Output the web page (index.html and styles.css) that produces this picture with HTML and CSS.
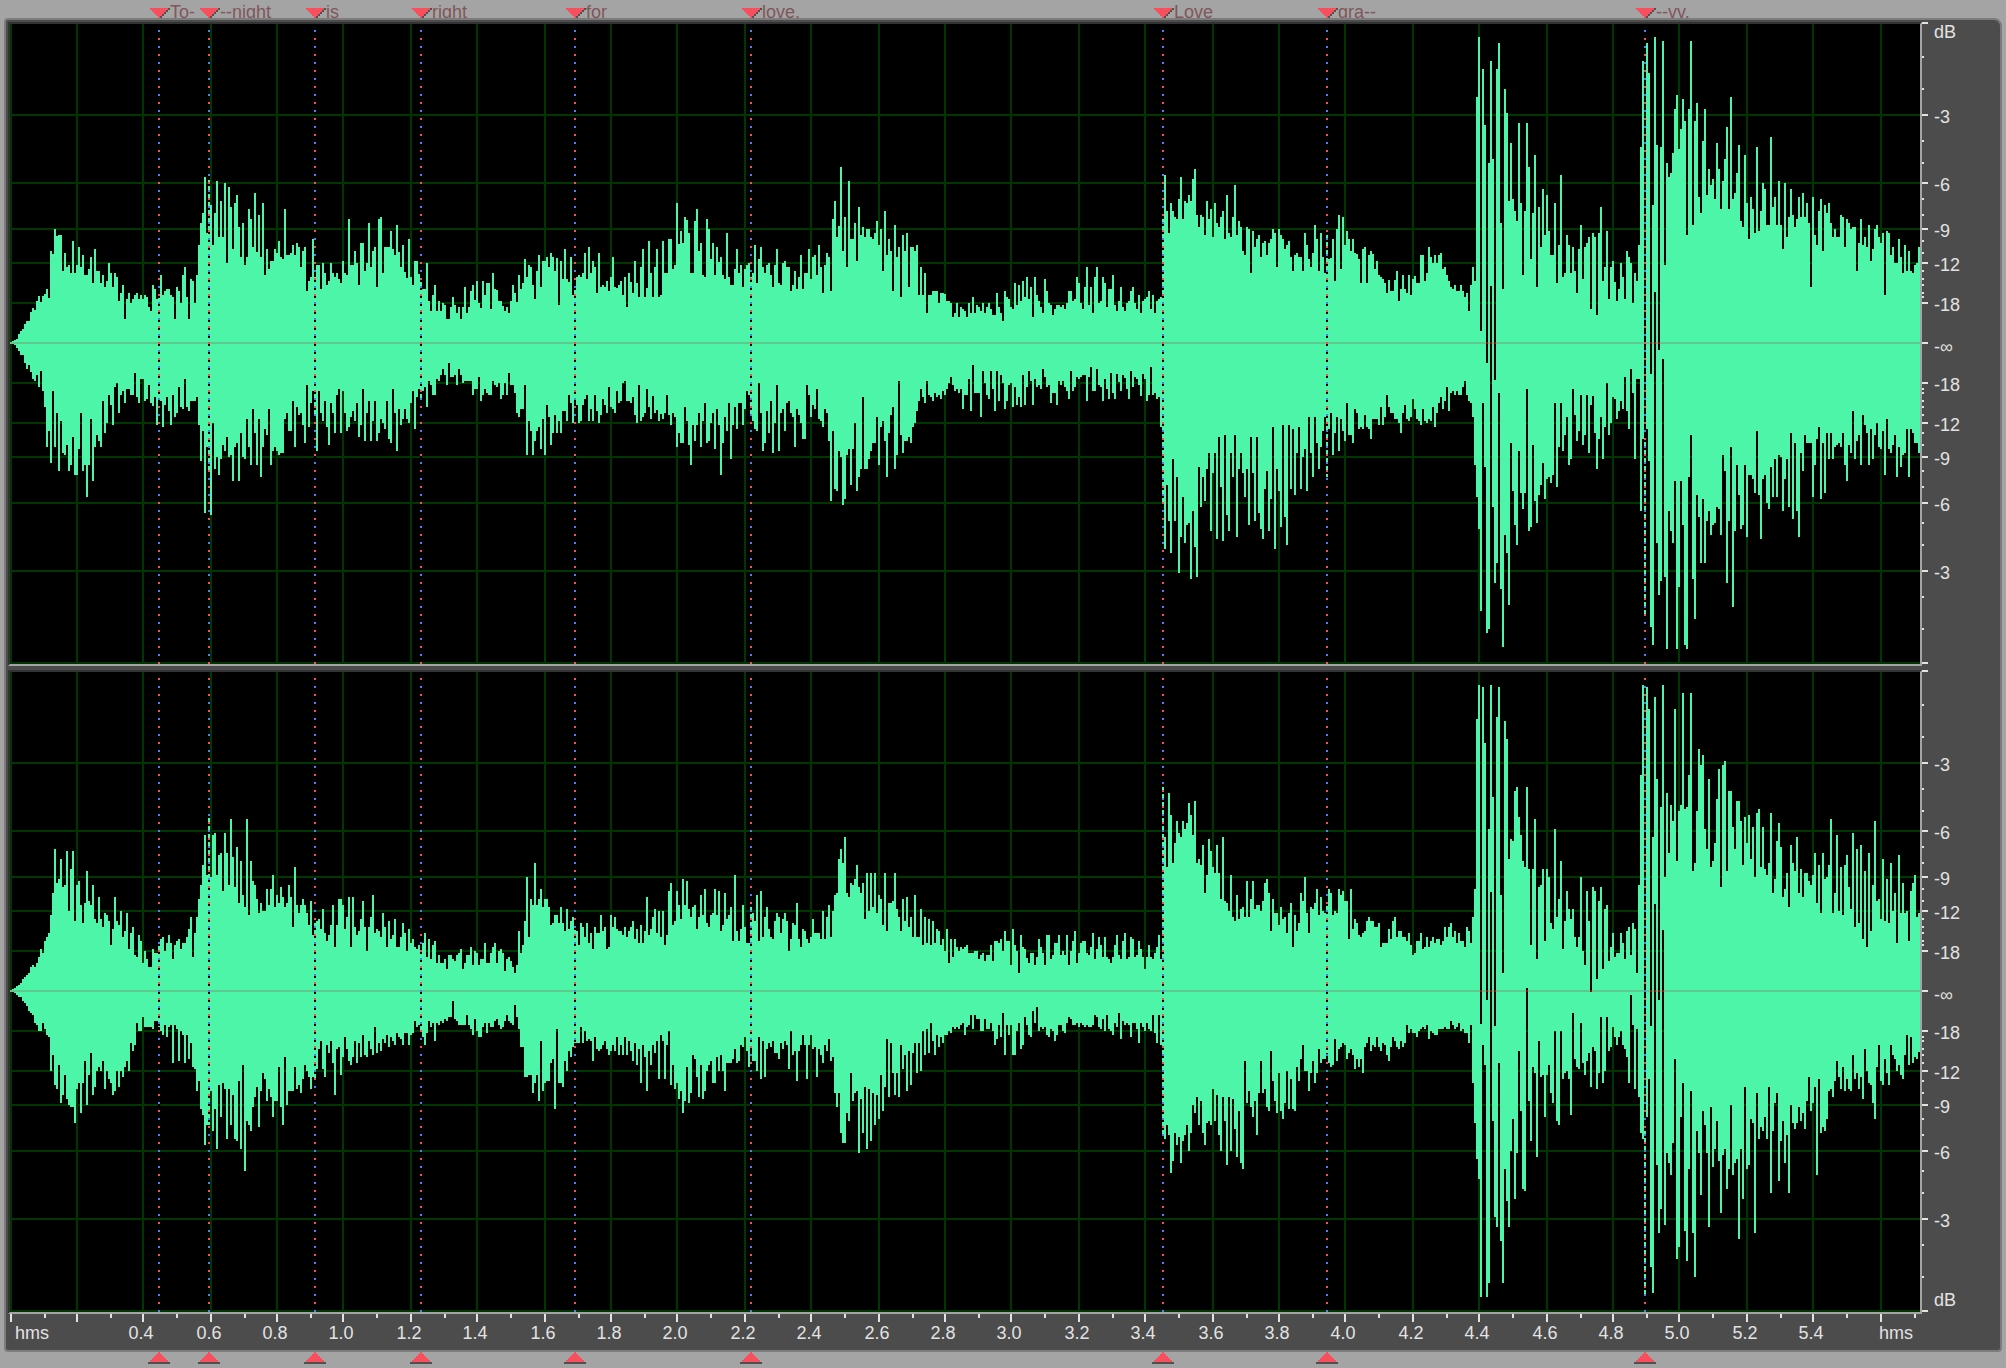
FILE: index.html
```html
<!DOCTYPE html>
<html lang="en">
<head>
  <meta charset="utf-8">
  <title>Waveform editor</title>
  <link rel="stylesheet" href="styles.css">
</head>
<body>
  <header class="marker-bar"><ol class="pins" id="pins-top"></ol></header>
  <main class="frame">
    <section class="channel" aria-label="Left channel">
      <div class="plot" id="plot-left"></div>
      <div class="scale" id="scale-left"></div>
    </section>
    <section class="channel channel-lower" aria-label="Right channel">
      <div class="plot" id="plot-right"></div>
      <div class="scale" id="scale-right"></div>
    </section>
    <div class="timeline" id="timeline"></div>
  </main>
  <footer class="marker-foot"><ol class="pins" id="pins-bottom"></ol></footer>
  <script src="waveform.js"></script>
</body>
</html>
```
FILE: styles.css
```css
* {
  box-sizing: border-box;
}

body {
  margin: 0;
  min-height: 100vh;
  padding: 0 4px;
  display: flex;
  flex-direction: column;
  background: #a4a4a4;
  font-family: "Liberation Sans", Arial, sans-serif;
  font-size: 18px;
  line-height: 20px;
}

svg {
  display: block;
  shape-rendering: crispEdges;
}

.pins {
  position: relative;
  height: 100%;
  margin: 0 82px 0 6px;
  padding: 0;
  list-style: none;
}

.marker-bar {
  height: 18px;
  overflow: hidden;
}

.marker-foot {
  height: 16px;
}

.pin {
  position: absolute;
  top: 0;
  line-height: 24px;
  padding-left: 11px;
  color: #80565a;
  white-space: nowrap;
}

.pin svg {
  position: absolute;
  left: -9px;
  top: 8px;
}

.marker-foot .pin svg {
  left: -11px;
  top: 0;
}

.frame {
  flex: 1;
  display: flex;
  flex-direction: column;
  padding: 2px 0 0 2px;
  background: #4c4c4c;
  border: 2px solid #7c7c7c;
  border-radius: 4px 8px 4px 4px;
}

.channel {
  flex: 1;
  display: flex;
  min-height: 300px;
}

.channel-lower {
  margin-top: 4px;
}

.plot {
  position: relative;
  flex: 1;
  background: #000;
  border: 2px solid #333;
  border-right-color: #a4a4a4;
  border-bottom-color: #a4a4a4;
}

.plot svg {
  position: absolute;
  width: 100%;
  height: 100%;
}

.grid {
  fill: #003700;
}

.silence {
  fill: #a80000;
}

.wave {
  fill: #4df5a8;
}

.zero {
  fill: #5dc98c;
}

.cue {
  position: absolute;
  top: 6px;
  bottom: 0;
  width: 2px;
  margin-left: -1px;
  background: repeating-linear-gradient(#4c83f4 0 2px, #000 2px 4px, transparent 4px 8px, #f74f5e 8px 10px, #000 10px 12px, transparent 12px 16px);
}

.channel-lower .cue {
  background: repeating-linear-gradient(#f74f5e 0 2px, #000 2px 4px, transparent 4px 8px, #4c83f4 8px 10px, #000 10px 12px, transparent 12px 16px);
}

.scale {
  position: relative;
  width: 78px;
  color: #e2e2e2;
}

.scale svg {
  width: 100%;
  height: 100%;
  fill: #e2e2e2;
}

.scale span {
  position: absolute;
  left: 12px;
  transform: translateY(-50%);
}

.timeline {
  position: relative;
  height: 36px;
  margin: 0 80px 0 2px;
  color: #e2e2e2;
}

.timeline svg {
  width: 100%;
  height: 8px;
  fill: #e2e2e2;
}

.timeline span {
  position: absolute;
  top: 9px;
  transform: translateX(-50%);
}
```
FILE: waveform.js
```js
// Plot units: 1910 wide, 640 high, zero line at y = 319. Peaks are sampled
// every 2 units; "n:" moves the write position, other tokens are peak heights.
const WIDTH = 1910, HEIGHT = 640, ZERO = 319, LEFT = 10;

const peaks = {
  leftUp: `11: 0 1 2 3 8 11 13 18 21 21 30 34 32 41 46 40 46 48 53 44 91 88 113 106 107 107 71 89 75 77 69 101 69 77 95 75 87 67 67 73 85 59 93 71 71 59 67 55 61 79 69 55 69 65 41 49 57 23 43 49 39 43 47 49 43 47 43 47 45 35 31 57 53 43 47 67 47 51 53 53 47 45 23 55 51 39 67 75 45 23 63 61
 199: 97 119 129 165 109 162 137 97 129 161 105 141 105 159 79 155 135 93 139 147 115 85 119 77 85 133 123 95 149 90 127 85 139 67 93 73 81 81 93 89 101 85 83 133 87 87 89 97 87 99 95 75 91 95 51 61 65 103 65 77 77 53 79 69 57 61 79 69 65 69 63 59 81 69 67
 349: 123 77 77 91 79 57 99 99 71 79 119 75 91 95 55 123 125 69 95 95 95 111 93 87 117 90 75 97 70 64 103 65 57 81 81 68 62 53 53 79 41 31 47 57 31 41 31 39 37 23 23 35 45 37 29 35 23 35 55 29 35 51 57 42 61 39 34 61 47 59 59 33 69 53 52 41 41 36 31 35 29 41 57 49 40 67 53 59 83 65 77 75 57 43 71 87 55 81 81 85 75 89 85 71 84 37 81 63 93 63 60 85 47 55 65 67 65 69 89 63 95 69 81 75 49 89 55 57 55 61 51 65 85 55 54 57 61 47 65 35 69 60 49 81 59 45 75 93 45 54 101 69
 661: 47 101 69 69 103 103 73 77 139 98 111 99 125 122 109 69 69 121 133 91 99 67 65 123 113 83 99 67 95 80 85 67 63 109 65 57 57 73 93 69 77 55 73 77 79 65 69 97 59 83 95 75 69 77 79 67 55 77 93 59 57 79 81 75 75 51 57 71 53 65 87 53 69 69 93 63 85 87 67 97 75 49 77 89 85 51 123 141 105
 839: 116 175 91 125 75 161 103 103 119 81 135 107 115 105 113 113 105 103 109 121 97 113 71 131 87 103 91 51 117 85 95 45 107 91 109 55 95 95 91 97 47 75 47 69 29 47 47 51 51 51 39 49 49 48 41 41 39 25 29 39 25 35 33 31 25 39 29 45 29 37 35 31 39 29 35 39 33 27 27 49 35 29 21 51 45 43 35 33 59 37 57 41 61 45 65 43 55 25 65 47 41 35 29 63 51 39 37 27 33 37 37 35 37 33 39 51 51 41 43 65 59 39 33 55 75 37 55 29 65 75 39 41 65 59 35 53 53 67 37 31 41 55 35 31 39 41 51 55 39 33 47 29 41 43 45 51
 1163: 123 167 131 109 139 131 125 123 143 165 123 141 139 147 141 163 173 127 115 127 125 107 141 123 133 105 139 119 115 125 131 103 147 109 105 125 157 107 121 115 91 87 115 113 69 111 95 103 107 85 99 101 87 99 103 113 109 75 113 107 103 93 97 101 85 71 87 89 85 85 71 109 97 83 75 89 117 103 71 109 85 69 107 83 84
 1333: 103 61 113 127 73 125 97 111 103 91 103 89 88 83 59 93 95 59 87 91 88 73 81 67 65 63 59 49 62 51 51 62 71 41 53 67 53 49 67 47 63 66 59 59 87 87 61 69 95 85 79 87 79 87 89 73 75 67 61 55 53 57 51 51 57 51 45 49
 1469: 31 57 75 61 245 305 11 273 217 -20 179 281 183 -37 273 299 119 53 253 229 141 199 143 131 121 219 139 67 131 219 175 83 129 187 55 135 95 153 107 147 111 87 87 139 59 97 167 65 69 107 97 69 95 71 49 93
 1581: 117 63 95 99 105 33 109 105 27 109 135 61 75 111 43 75 81 60 41 53 79 65 43 91 85 79 39 69 61
 1639: 97 195 281 -95 299 269 -31 137 305 197 -7 195 301 77 179 165 169 189 233 247 193 213 243 221 107 233 301 117 221 239 145 129 201 233 147 173 157 163 143 199 173 133 161 183 215 133 245 143 149 169 197 121 115 187 139 103 145 133 109 195 111 131 159 153 117 117
 1771: 205 135 145 117 161 117 93 159 105 125 153 127 115 123 145 125 149 125 139 119 55 145 107 97 131 143 91 137 129 139 119 105 113 105 105 127 125 95 123 119 113 115 115 71 99 123 97 105 95 117 81 93 113 117 105 99 109
 1885: 47 111 109 87 95 79 79 103 85 69 97 71 91 71 69 77 79 95`,
  leftDown: `11: 0 0 1 4 7 11 11 19 25 21 28 35 37 31 43 27 47 63 103 87 119 47 103 69 127 77 109 111 101 127 121 93 131 131 105 69
 87: 153 121 75 137 103 91 97 103 57 89 79 51 61 81 43 39 69 51 47 59 45 45 51 51 29 53 59 35 35 57 55 41 59 62 53 81 57 57 83 61 53 67 81 51 73 69 43 63 65 35 63 67 57 57 57 53 81
 201: 117 87 169 103 127 171 79 125 113 131 115 101 107 93 113 111 137 103 99 137 89 113 115 75 103 121 65 89 121 75 133 103 85 91 65 121 107 103 107 111 109 109 75 69 87 87 57 103 63 71 69 81 99 41 83 59 47 73
 317: 107 47 69 77 57 83 101 59 69 89 51 45 89 47 69 87 83 73 67 77 59 93 81 45 97 69 57 97 77 57 97 89 75 79 85 57 95 99 45 69 107 65 81 75 65 75 79 59 47 85 53 45 55 47 43 63 37 41 51 51 35 37 31 25 31 41 19 33 33 31 41 25 31 39 37 37 37 37 51 45 45 33 57 51 45 49 51 51 37 41 43 39 55 51 39 51 29 41 41 49 69 73 65 65
 527: 111 77 87 111 97 87 83 105 75 111 61 73 101 89 71 89 77 89 67 67 77 51 59 79 57 61 79 77 61 55 51 77 65 77 51 67 79 71 55 61 69 43 63 65 69 47 59 57 39 37 57 57 59 53 71 79 41 77 73 69 45 63 75 52 69 66 77
 661: 70 75 69 51 71 81 69 73 103 89 99 99 63 77 101 121 81 97 81 69 103 77 59 99 97 79 69 105 65 81 131 99 73 87 59 115 81 63 85 59 59 81 65 47 51 73 77 85 87 39 69 107 99 67 89 57 109 79 41 107 69 65 87 59 57 69 73 103 65 71 79 95 95 41 51 73 61 65 45 75 77 83 65 69 97
 831: 157 87 145 147 107 113 161 155 111 105 141 105 79 147 133 125 53 125 125 115 107 99 99 73 121 83 77 97 133 89 71 63 125 111 37 91 109 97 97 93 99 83 79 67 57 45 53 59 37 51 53 57 49 53 51 55 47 51 45 39 33 41 47 45 49 45 65 51 51 35 67 21 49 49 49 73 27 39 51 55 27 45 67
 999: 57 31 39 65 57 41 39 63 43 61 53 63 31 61 43 27 37 61 35 43 41 45 25 33 43 41 59 49 49 61 37 41 37 43 47 55 27 47 43 33 35 33 31 31 57 33 23 47 47 25 41 43 57 35 45 55 29 49 55 30 38 47 31 34 45 55 27 43 33 35 41 52 30 35 57 51 23 51 49 55 53 83
 1163: 160 205 141 177 209 115 177 133 229 193 153 199 181 179 235 167 203 233 123 163 133 157 125 109 187 129 109 195 93 143 197 91 171 187 109 133 91 193 125 109 129 153 125 181 93 129 177 93 169 185 195 145 127 187 155 83 205 125 147 183 81 173 201 81 145 85 151 109 83 145 113 105 147 73 109 133 73 99 125 103 87 73 133 85 69
 1333: 111 89 73 107 75 87 97 59 91 91 99 65 69 85 83 85 71 83 85 95 75 75 75 81 63 81 73 51 63 69 69 75 75 79 89 69 61 75 77 73 55 65 75 77 81 65 77 79 75 77 63 83 69 59 53 65 57 43 67 49 47 51 47 51 51 43 37 51 57 59
 1473: 73 121 153 185 267 59 123 289 285 -57 163 239 219 49 245 303 191 209 261 99 147 181 201 107 149 165 149 45 187 183 101 157 179 151 141 119 155 135 133 139 131 59 143 103 59 107 91 73 121 115 45 71 97 87 51 101 91 51 109 61 52 89 125 95 73 115 83 39 91 79 53 55 75 67 57 65 33 67 85 25 49 115 35 35
 1641: 167 95 270 85 117 283 301 -51 199 251 237 15 233 305 167 187 199 137 305 243 137 181 301 305 133 91 235 275 151 173 219 155 219 177 167 191 181 179 163 165 191 111 127 239 177 103 263 187 121 151 185 181 121 193 131 131 135 149 87 151 195 135 131 159 165 123 153 115 153 111 113 167 135 115 163 89 175 99
 1799: 193 109 127 91 99 99 99 153 121 95 83 155 99 149 89 115 89 115 103 101 99 103 89 121 137 101 109 67 115 97 91 121 71 81 89 121 85 115 91 79 103 105 87 131 75 105 109 101 91 133 103 123 111 109 85 133 85 89 99 99`,
  rightUp: `11: 0 1 2 4 5 7 11 13 15 17 23 25 23 27 33 41 37 49 53 57 75 97 141 107 111 131 103 105 139 79 121 139 69 105 109 85 67 87 119 89 85 105 71 67 93 71 63 77 75 69 45 61 93 69 65 79 53 59 77 41 57 63 35 33 55 49 27 39 31 23 23 41 37 37 47 51 53 39 47 55 47 31 45 49 51 41 47 47 53 61 73 33 57 73 91 105 125 155 115 173 113 155 157 115 135 137 99 157 137 105 171 133 103 143 87 129 95 83 171 75 129 109 105 91 77 87 79 79 101 85 101 115 83 95 87 103 93 83 87 105 93 63 123 85 77 85 91 85 77 65 89 55 67 69 71 61 81 57 49 55 65 85 43 65 91 91 85 61 73 93 43 93 63 55 59 71 89 63 39 63 73 95 57 61 59 53 77 63 43 69 51 55 71 43 43 53 67 57 39 61 47 51 43 41 45 39 47 57 33 51 31 45 49 27 35 27 27 31 21 35 35 31 29 35 37 41 21 27 35 35 43 25 39 37 25 31 31 47 27 27 37 43 47 27 39 41 37 19 31 33 29 23 17 25 59 37 45 69
 527: 113 53 91 85 127 85 91 101 83 91 91 83 65 67 75 75 67 83 67 59 81 61 69 73 61 59 45 67 63 53 67 47 57 41 63 57 57 75 59 63 41 43 75 63 73 61 59 59 55 63 53 59 63 69 51 61 47 65 47 59 93 55 61 73 81 57 79
 661: 53 79 45 55 99 107 65 69 99 85 71 111 85 109 81 73 83 85 61 73 95 75 101 67 63 75 77 101 75 99 59 65 97 71 75 83 49 115 59 49 61 85 63 47 47 83 77 69 95 49 99 53 73 83 61 53 51 69 77 73 57 71 77 69 39 51 67 65 87 51 43 61 59 51 47 53 71 57 57 57 51 79 51 73 85 53 79 95 97
 839: 131 141 127 153 97 93 107 105 111 125 103 97 107 71 117 79 117 83 117 77 95 91 65 117 59 87 87 89 117 81 73 59 91 69 93 63 73 53 95 53 53 81 45 73 47 71 45 69 47 61 59 45 51 39 61 27 51 33 51 43 39 43 41 43 45 37 37 37 39 39 31 35 37 29 35 35 45 29 49 49 47 51 39 59 49 49 25 61 45 39 17 55 43 41 32 27 37 37 25 33 51 43 37 25 55 55 31 35 47 47 55 35 39 35 55 25 39 49 59 27 37 47 49 49 37 35 43 57 31 41 53 45 33 53 33 31 27 33 45 55 35 31 49 57 31 33 53 51 33 35 49 41 33 21 33 45 33 31 37 43 55 31
 1163: 203 153 123 197 175 127 147 169 157 153 169 161 167 187 175 155 189 127 131 125 145 97 115 151 139 123 117 145 117 91 153 89 87 79 115 73 69 95 71 81 83 73 109 73 91 109 81 85 85 79 89 107 111 97 59 91 77 77 65 83 71 73 57 77 87 43 75 59 67 97 89 113 77 57 83 81 87 101 75 93 79 77 85 101 97
 1333: 75 79 77 101 95 99 89 89 51 101 61 71 67 55 53 57 59 69 73 69 69 63 63 67 43 47 47 47 61 51 69 73 53 59 59 53 53 49 57 45 35 37 49 49 57 41 43 53 43 49 53 47 51 51 45 49 63 53 63 67 53 59 47 57 49 49 43 63 59
 1473: 73 101 271 305 -33 303 247 -9 161 305 193 -35 273 303 95 17 269 251 131 151 149 199 203 173 155 129 123 203 121 45 121 171 31 103 105 121 49 121 113 67 61 161 73 91 129 41 69 99 81 71 81 53 43 53 113 39 25 99 69 -1 103 99 11 89 103 21 81 85 29 43 57 33 37 37 57 47 31 59 63 35 67 61
 1637: 17 105 215 305 -140 303 281 -35 153 293 211 -9 183 305 113 197 137 185 169 281 129 179 185 297 181 183 215
 1691: 297 119 127 179 241 225 235 161 141 211 123 129 147 191 221 103 225 229 119 199 199 163 141 189 189 169 125 173 147 175 131 163 113 177 181 123 163 121 115 127
 1771: 177 97 111 149 167 143 93 101 117 83 145 127 119 153 97 121 93 117 117 109 105 115 137 87 125 77 137 111 113 125
 1831: 171 77 97 155 79 123 75 125 135 103 81 157 63 141 67 145 51 119 43 137 59 105 169 89 91 71 131 69 111 67 127 79 97 47 135 77 107 77 79 49 99 107 115 73 77`,
  rightDown: `11: 0 0 1 3 5 5 9 11 14 19 21 23 31 33 39 39 31 37 43 45 79 63 93 97 73 111 103 83 107 113 115 115 131 97 91 121 91 69 113 83 61 103 95 79 75 79 69 97 79 87 91 103 99 79 95 79 85 75 69 79 51 59 53 31 39 39 25 35 35 35 35 37 29 29 35 39 43 33 45 35 33 71 33 37 69 39 43 71 43 67 51 75 77 99 89 117 123 153 133 133 99 139 117 157 93 125 91 97 147 97 133 103 147 149 89 157 73
 245: 179 129 133 139 115 105 95 135 99 81 87 109 97 105 125 109 109 75 115 133 65 113 99 99 99 75 97 93 101 87 73 79 85 97 85 87 77 57 49 77 85 53 61 49 71 103 57 55 83 65 45 57 69 73 65 49 71 51 65 43 63 65 49 57 63 35 61 51 59 47 51 43 55 45 49 53 41 45 47 53 41 41 53 43 41 29 35 33 39 45 53 41 29 35 31 49 31 33 29 31 27 29 25 25 9 27 29 33 33 33 33 23 33 37 43 27 39 45 45 35 31 41 31 35 35 29 27 33 37 35 29 23 29 31 33 13 25 37 55 55 85 85 83 83 101 91 83 109 49 99 91 89 89 71 67
 555: 117 37 91 91 95 69 79 59 65 55 51 51 51 35 51 39 49 47 49 69 45 57 59 57 53 49 57 63 59 53 59 45 63 53 63 45 63 49 59 69 51 73 57 91 53 65 99 59 73 53 61 49 87
 661: 43 49 87 53 39 93 73 97 91 107 99 121 109 75 111 101 63 67 85 105 73 107 99 79 73 69 91 91 65 79 63 79 99 71 71 71 67 57 71 69 53 55 45 59 75 56 69 69 79 45 87 49 85 57 51 55 49 61 61 67 51 57 49 53 77 39 63 59 89 59 53 43 53 87 53 43 57 55 85 57 63 71 53 59 47 69 65 101 115 101 141 151 151 121 129 81 109 101 99 161 107 141 95 157 97 149 101 133 103 127 83 119 95 47 105 51 81 103 81 105 53 77 63 99 59 93 61 51 81 51 79 39 63 37 61 31 49 63 43 55 45 51 43 43 39 41 35 37 35 37 33 31 43 35 33 23 37 23 27 27 39 39 27 37 37 31 39 53 47 33 45 21 63 33 43 33 63 63 39 31 57 53 25 33 43 45 19 31 15 39 35 37 35 43 45 37 39 49 43 33 33 39 41 31 25 27 33 33 31 35 31 33 35 33 35 35 33 23 25 35 37 27 39 23 37 39 43 31 35 21 47 29 33 31 33 45 31 31 37 51 31 35 39 31 37 39 23 41 51 23 53
 1163: 145 147 133 143 181 169 141 153 145 171 149 143 133 159 141 113 121 105 133 109 141 153 131 129 133 97 129 103 143 159 105 129 173 105 159 107 137 165 119 171 177 69 111 99 115 125 109 143 101 69 101 97 115 119 59 89 109 121 81 119 127 111 79 117 87 117 119 75 89 67 53 79 79 99 81 69 91 81 57 71 67 67 61 71 75
 1333: 73 47 69 57 55 51 53 67 61 57 63 77 67 75 67 81 55 51 45 59 53 55 45 55 59 51 53 63 69 55 45 49 55 57 49 55 51 33 41 37 41 41 45 39 37 35 37 33 47 39 41 43 43 37 37 37 35 37 37 29 33 37 35 31 39 37 41 41 51 33
 1473: 91 131 167 187 305 53 73 305 291 -99 129 225 235 71 249 291 177 209 235 159 127 207 161 59 119 197 199 -3 109 149 75 81 165 49 85 83 125 83 73 101 111 39 129 133 39 87 81 79 87 123 21 67 75 77 31 71 83 69 61 95 55 59 97 81 25 91 79 25 59 55 35 45 53 45 39 53 57 65 91 3 33 97 37 105
 1641: 141 147 305 125 87 275 301 -87 173 241 217 -61 233 161 171 183 151 67 267 255 125 91 239 269 177 99 241 285 139 161 203 119 133 161 235 115 175 157 129 169 221 163 157 197 177 113 183 171 167 247 157 207 95 177 173 127 131 241 101 147 135 139 125 147 95 201 139 111 101 189 149 129 171 143 201 113 131 137 131 115 129 121 137 109 85 119 111 95
 1817: 183 87 141 135 139 127 99 97 105 89 69 85 97 75 99 87 97 99 63 87 81 97 85 107 57 79 91 93 111 127 75 53 89 93 67 81 93 53 63 67 79 73 83 87 63 43 73 45 71 65 67 60`
};

const markers = [
  [159, 'To-'], [209, '--night'], [315, 'is'], [421, 'right'], [575, 'for'],
  [751, 'love.'], [1163, 'Love'], [1327, 'gra--'], [1645, '--vv.']
];

const percent = (value, total) => (value / total * 100) + '%';
const svg = (w, h, body, extra = '') =>
  `<svg viewBox="0 0 ${w} ${h}" aria-hidden="true" ${extra}>${body}</svg>`;
const put = (id, html) => { document.getElementById(id).innerHTML = html; };

// Unsampled columns repeat the texture a few columns back.
function readPeaks(text) {
  const values = [];
  let column = 0;
  for (const token of text.split(/\s+/)) {
    if (token.endsWith(':')) column = (parseInt(token, 10) - 11) / 2;
    else values[column++] = Number(token);
  }
  for (let i = 0; i < WIDTH / 2; i++) {
    if (values[i] === undefined) values[i] = values[i - 7];
  }
  return values;
}

// Grid lines fall every 0.2 s, snapped to the 2-unit columns.
const STEP = 66.79;
const snap = x => 2 * Math.floor(x / 2);
const dbLines = [40, 80, 114, 160, 228];

function drawPlot(id, up, down) {
  let grid = '', wave = '', zero = '';
  for (let k = 0; k <= 28; k++) grid += `M${snap(k * STEP)} 0h2v${HEIGHT}h-2z`;
  for (const d of dbLines) {
    grid += `M0 ${ZERO - d - 1}h${WIDTH}v2H0z`;
    grid += `M0 ${ZERO + d - 1}h${WIDTH}v2H0z`;
  }
  grid += `M0 638h${WIDTH}v2H0z`;
  const top = readPeaks(up), bottom = readPeaks(down);
  for (let i = 0; i < WIDTH / 2; i++) {
    const y1 = ZERO - top[i] - (top[i] < 0 ? 0 : 1);
    const y2 = ZERO + bottom[i] + (bottom[i] < 0 ? 0 : 1);
    wave += `M${i * 2} ${y1}h2V${y2}h-2z`;
    if (top[i] >= 0 && bottom[i] >= 0) zero += `M${i * 2} ${ZERO - 1}h2v2h-2z`;
  }
  put(id, svg(WIDTH, HEIGHT,
    `<path class="grid" d="${grid}"/><path class="silence" d="M0 318h${WIDTH}v2H0z"/>` +
    `<path class="wave" d="${wave}"/><path class="zero" d="${zero}"/>`,
    'preserveAspectRatio="none"') +
    markers.map(([x]) => `<div class="cue" style="left:${percent(x - LEFT, WIDTH)}"></div>`).join(''));
}

function drawScale(id, unitY) {
  const rowHeight = 644, zero = 321;
  let ticks = 'M0 320h6v2H0z';
  const labels = [[zero + 2, '-∞'], [unitY - 3, 'dB']];
  const names = ['-18', '-12', '-9', '-6', '-3'];
  for (const side of [-1, 1]) {
    for (const d of [...dbLines, 320]) ticks += `M0 ${zero + side * d - 1}h6v2H0z`;
    for (const d of [46, 50, 58, 64, 72, 90, 102, 128, 144, 180, 202, 254, 286]) {
      ticks += `M0 ${zero + side * d - 1}h2v2H0z`;
    }
    dbLines.forEach((d, i) => labels.push([zero + side * d, names[i]]));
  }
  put(id, svg(78, rowHeight, `<path d="${ticks}"/>`, 'preserveAspectRatio="none"') +
    labels.map(([y, t]) => `<span style="top:${percent(y + 2, rowHeight)}">${t}</span>`).join(''));
}

function drawTimeline() {
  let ticks = '', labels = '';
  for (let k = 0; k <= 28; k++) {
    const x = snap(k * STEP);
    ticks += `M${x} 0h2v8h-2z`;
    ticks += `M${snap(k * STEP + 34)} 0h2v4h-2z`;
    if (k > 1 && k < 28) {
      labels += `<span style="left:${percent(x - 1, WIDTH)}">${(k * 0.2).toFixed(1)}</span>`;
    }
  }
  labels += `<span style="left:${percent(22, WIDTH)}">hms</span>`;
  labels += `<span style="left:${percent(1886, WIDTH)}">hms</span>`;
  put('timeline', svg(WIDTH, 8, `<path d="${ticks}"/>`, 'preserveAspectRatio="none"') + labels);
}

function drawPins() {
  const down = svg(20, 10,
    '<path fill="#f74f5e" d="M0 0h18v2h-2v2h-2v2h-2v2h-2v2H8V8H6V6H4V4H2V2H0z"/>' +
    '<path fill="#505050" d="M18 0h2v2h-2v2h-2v2h-2v2h-2v2h-2V8h2V6h2V4h2V2h2z"/>',
    'width="20" height="10"');
  const up = svg(22, 12,
    '<path fill="#f74f5e" d="M10 0h2v2h2v2h2v2h2v2h2v2H2V8h2V6h2V4h2V2h2z"/>' +
    '<path fill="#505050" d="M0 10h22v2H0z"/>', 'width="22" height="12"');
  const pin = (x, body) => `<li class="pin" style="left:${percent(x - LEFT, WIDTH)}">${body}</li>`;
  put('pins-top', markers.map(([x, name]) => pin(x, down + name)).join(''));
  put('pins-bottom', markers.map(([x]) => pin(x, up)).join(''));
}

drawPlot('plot-left', peaks.leftUp, peaks.leftDown);
drawPlot('plot-right', peaks.rightUp, peaks.rightDown);
drawScale('scale-left', 11);
drawScale('scale-right', 631);
drawTimeline();
drawPins();
```
